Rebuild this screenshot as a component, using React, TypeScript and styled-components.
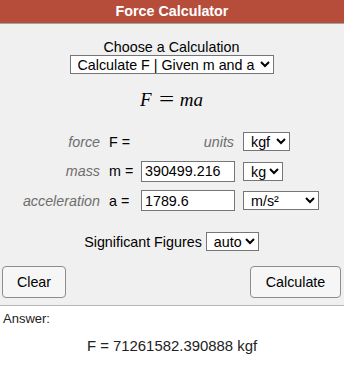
import styled, { createGlobalStyle } from "styled-components";

const GlobalStyle = createGlobalStyle`
  body {
    margin: 0;
    background: #fff;
    font-family: "Liberation Sans", Arial, sans-serif;
    color: #000;
  }
`;

export default function App() {
  return (
    <>
      <GlobalStyle />
      <Calculator>
        <Header>Force Calculator</Header>
        <Form>
          <Heading>Choose a Calculation</Heading>
          <Select $width={204} defaultValue="F">
            <option value="F">Calculate F | Given m and a</option>
            <option value="m">Calculate m | Given F and a</option>
            <option value="a">Calculate a | Given F and m</option>
          </Select>

          <Formula>
            <i>F</i>
            <Equals>=</Equals>
            <i>ma</i>
          </Formula>

          <Grid>
            <Label>force</Label>
            <Symbol>F =</Symbol>
            <UnitsLabel>units</UnitsLabel>
            <UnitCell>
              <Select $width={47} defaultValue="kgf">
                <option>N</option>
                <option>kN</option>
                <option value="kgf">kgf</option>
                <option>lbf</option>
              </Select>
            </UnitCell>

            <Label>mass</Label>
            <Symbol>m =</Symbol>
            <Input defaultValue="390499.216" />
            <UnitCell>
              <Select $width={40} defaultValue="kg">
                <option>g</option>
                <option value="kg">kg</option>
                <option>lb</option>
              </Select>
            </UnitCell>

            <Label>acceleration</Label>
            <Symbol>a =</Symbol>
            <Input defaultValue="1789.6" />
            <UnitCell>
              <Select $width={76} defaultValue="ms2">
                <option value="ms2">m/s²</option>
                <option>ft/s²</option>
              </Select>
            </UnitCell>
          </Grid>

          <SigRow>
            <span>Significant Figures</span>
            <Select $width={53} defaultValue="auto">
              <option value="auto">auto</option>
              <option>3</option>
              <option>4</option>
              <option>5</option>
            </Select>
          </SigRow>

          <Buttons>
            <Button $width={64}>Clear</Button>
            <Button $width={91}>Calculate</Button>
          </Buttons>
        </Form>

        <Answer>
          <AnswerLabel>Answer:</AnswerLabel>
          <Result>F = 71261582.390888 kgf</Result>
        </Answer>
      </Calculator>
    </>
  );
}

const Calculator = styled.div`
  width: 344px;
  font-size: 14.3px;
`;

const Header = styled.div`
  height: 23px;
  line-height: 23px;
  background: #b64d3b;
  color: #fff;
  font-weight: bold;
  text-align: center;
  border-bottom: 1px solid #a3a3a3;
`;

const Form = styled.div`
  background: #f0f0f0;
  padding: 14.5px 3px 7px 2px;
  display: flex;
  flex-direction: column;
  align-items: center;
  border-bottom: 1px solid #b5b5b5;
`;

const Heading = styled.div`
  line-height: 16.5px;
`;

const Select = styled.select<{ $width: number }>`
  width: ${(p) => p.$width}px;
  height: 19px;
  box-sizing: border-box;
  font-family: "Liberation Sans", Arial, sans-serif;
  font-size: 14.3px;
  color: #000;
  background-color: #fff;
  border: 1px solid #767676;
  border-radius: 0;
  padding: 0 0 0 3px;
`;

const Formula = styled.div`
  margin-top: 13px;
  line-height: 24px;
  font-family: "Liberation Serif", "Times New Roman", serif;
  font-size: 19px;
  i {
    font-style: italic;
  }
`;

const Equals = styled.span`
  display: inline-block;
  margin: 0 8px 0 9px;
  font-size: 20px;
  transform: scaleX(1.35);
`;

const Grid = styled.div`
  align-self: stretch;
  margin-top: 15px;
  display: grid;
  grid-template-columns: 98px 41px 94px auto;
  grid-auto-rows: 29.5px;
  align-items: center;
`;

const Label = styled.div`
  text-align: right;
  font-style: italic;
  color: #6e6e6e;
`;

const Symbol = styled.div`
  padding-left: 9px;
`;

const UnitsLabel = styled(Label)`
  padding-right: 1px;
`;

const UnitCell = styled.div`
  padding-left: 8px;
  display: flex;
`;

const Input = styled.input`
  width: 94px;
  height: 21px;
  box-sizing: border-box;
  padding: 0 3px;
  font-family: "Liberation Sans", Arial, sans-serif;
  font-size: 14.3px;
  color: #000;
  background: #fff;
  border: 1px solid #767676;
  border-radius: 0;
`;

const SigRow = styled.div`
  margin-top: 16px;
  height: 20px;
  display: flex;
  align-items: center;
  gap: 4px;
`;

const Buttons = styled.div`
  align-self: stretch;
  margin-top: 14px;
  display: flex;
  justify-content: space-between;
`;

const Button = styled.button<{ $width: number }>`
  width: ${(p) => p.$width}px;
  height: 32px;
  font-family: "Liberation Sans", Arial, sans-serif;
  font-size: 14.3px;
  color: #000;
  background: #f6f6f6;
  border: 1px solid #8d8d8d;
  border-radius: 4px;
  padding: 0;
`;

const Answer = styled.div`
  padding: 5px 3px 0;
`;

const AnswerLabel = styled.div`
  font-size: 13px;
  color: #222;
`;

const Result = styled.div`
  margin-top: 12px;
  text-align: center;
  font-size: 14.9px;
  color: #222;
`;
